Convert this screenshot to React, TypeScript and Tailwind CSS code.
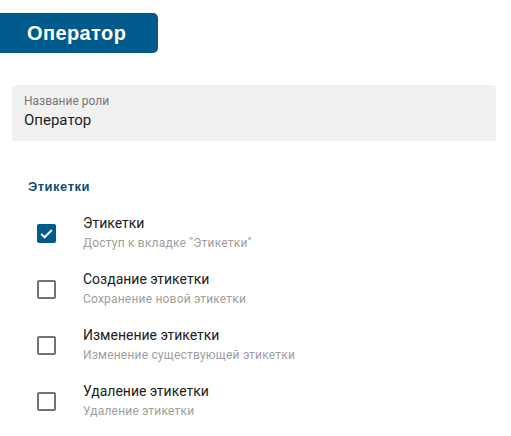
import React from 'react';

const permissions = [
  { title: 'Этикетки', desc: 'Доступ к вкладке "Этикетки"', checked: true },
  { title: 'Создание этикетки', desc: 'Сохранение новой этикетки', checked: false },
  { title: 'Изменение этикетки', desc: 'Изменение существующей этикетки', checked: false },
  { title: 'Удаление этикетки', desc: 'Удаление этикетки', checked: false },
];

function Checkbox({ checked }: { checked: boolean }) {
  if (checked) {
    return (
      <div className="w-[19px] h-[19px] rounded-[2px] bg-[#005a8b] flex items-center justify-center">
        <svg width="17" height="17" viewBox="0 0 24 24" fill="none">
          <path d="M4.5 12.5l4.8 4.8L19.5 7" stroke="white" strokeWidth="2.8" />
        </svg>
      </div>
    );
  }
  return <div className="w-[19px] h-[19px] rounded-[2px] border-2 border-[#737373]" />;
}

export default function App() {
  return (
    <div className="bg-white w-[511px] h-[436px] font-['Roboto',sans-serif]">
      <div className="pt-[13px]">
        <div className="w-[158px] h-[40px] bg-[#005a8b] rounded-r-[5px] flex items-center pl-[27px]">
          <span className="text-white text-[20px] tracking-[0.4px] font-bold font-['Liberation_Sans',sans-serif]">Оператор</span>
        </div>
      </div>

      {/* Role name field */}
      <div className="mt-[32px] ml-[12px] w-[484px] h-[56px] bg-[#f1f1f1] rounded-t-[4px] px-[12px] pt-[9px]">
        <div className="text-[12px] leading-[14px] text-[#757575]">Название роли</div>
        <div className="text-[15px] leading-[20px] text-[#212121] mt-[2px]">Оператор</div>
      </div>

      {/* Section */}
      <div className="mt-[38px] ml-[28px] text-[13px] tracking-[0.5px] font-bold text-[#0d4f73] leading-[16px] font-['Liberation_Sans',sans-serif]">Этикетки</div>

      <div className="mt-[18px] flex flex-col gap-[16px]">
        {permissions.map((p) => (
          <div key={p.title} className="flex items-center">
            <div className="w-[83px] pl-[37px] flex">
              <Checkbox checked={p.checked} />
            </div>
            <div>
              <div className="text-[14px] leading-[20px] text-[#212121]">{p.title}</div>
              <div className="text-[12px] leading-[20px] tracking-[0.2px] text-[#9e9e9e]">{p.desc}</div>
            </div>
          </div>
        ))}
      </div>
    </div>
  );
}
